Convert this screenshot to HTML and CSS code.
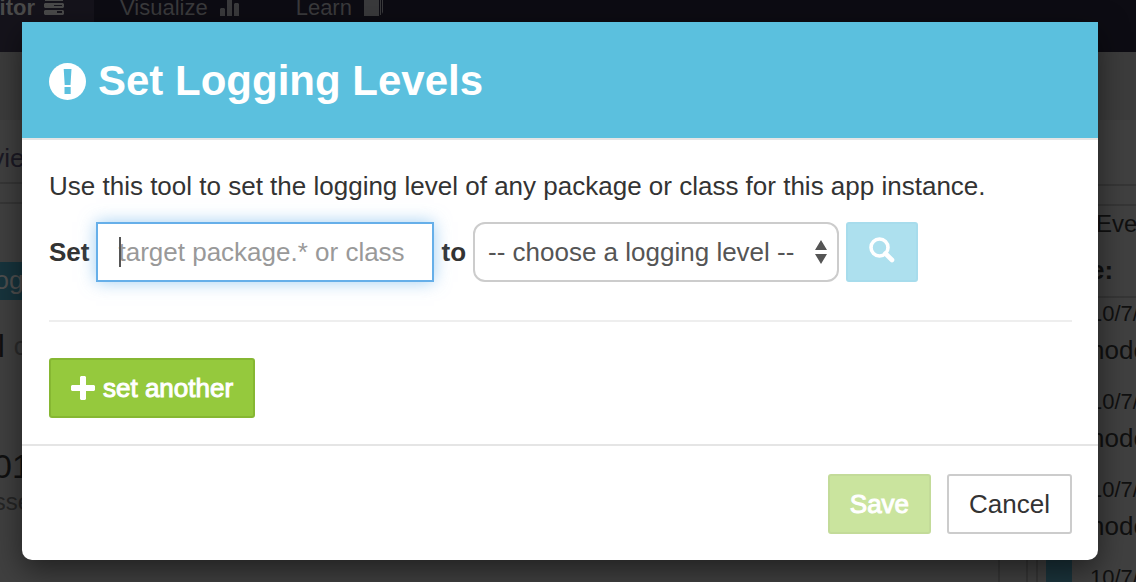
FILE: index.html
```html
<!DOCTYPE html>
<html lang="en">
<head>
<meta charset="utf-8">
<title>Set Logging Levels</title>
<link rel="stylesheet" href="styles.css">
</head>
<body>
<div class="page" inert>
  <nav class="nav">
    <a class="nav-item nav-active" href="#">Editor
      <svg width="20" height="16" viewBox="0 0 20 16"><path fill="currentColor" fill-rule="evenodd" d="M1 0h18v1H1zM1 3h18l1 1v3l-1 1H1L0 7V4zM10 5v1h8V5zM1 10h18l1 1v3l-1 1H1l-1-1v-3zM13 11v2h5v-2z"/></svg></a>
    <a class="nav-item" href="#">Visualize
      <svg width="19" height="16" viewBox="0 0 19 16"><path fill="currentColor" d="M0 9l1-1h3l1 1v7H0zM7 0h5v16H7zM14 4l1-1h3l1 1v12h-5z"/></svg></a>
    <a class="nav-item" href="#">Learn
      <svg width="19" height="16" viewBox="0 0 19 16"><path fill="currentColor" d="M0 0h15v16H0zM16 0h1v15h-1zM18 0h1v12l-1 2z"/></svg></a>
  </nav>
  <div class="band"></div>
  <div class="columns">
    <div class="side">
      <div class="side-tab">Overview</div>
      <div class="side-strip"></div>
      <div class="side-button">Logging</div>
      <div class="side-title">ol <span class="side-light">c</span></div>
      <div class="side-number">01</div>
      <div class="side-note">classes</div>
    </div>
    <div class="rail"></div>
    <div class="log">
      <div class="log-strip"></div>
      <div class="log-body">
        <div class="marker"></div>
        <div class="log-list">
          <div class="log-head">Eve</div>
          <div class="log-label">e:</div>
          <div class="entry"><div class="date">10/7/</div><div>node</div></div>
          <div class="entry"><div class="date">10/7/</div><div>node</div></div>
          <div class="entry"><div class="date">10/7/</div><div>node</div></div>
          <div class="entry"><div class="date">10/7/</div><div>node</div></div>
        </div>
      </div>
    </div>
  </div>
</div>

<form class="dialog" role="dialog" aria-labelledby="dialog-title">
  <header class="dialog-header">
    <svg width="37" height="37" viewBox="0 0 37 37" aria-hidden="true"><circle cx="18.500" cy="18.500" r="18.500" fill="#fff"/><path fill="#5bc0de" d="M14.700 6h7.800l-1 16h-5.800zM15.500 24h6.200v7h-6.200z"/></svg>
    <h1 id="dialog-title" class="dialog-title">Set Logging Levels</h1>
  </header>
  <div class="dialog-body">
    <p class="intro">Use this tool to set the logging level of any package or class for this app instance.</p>
    <div class="row">
      <label class="label" for="target">Set</label>
      <span class="target-wrap">
        <input class="target" id="target" type="text" placeholder="target package.* or class">
        <span class="caret"></span>
      </span>
      <label class="label" for="level">to</label>
      <span class="level-wrap">
        <select class="level" id="level"><option>-- choose a logging level --</option></select>
        <svg class="arrows" width="12" height="24" viewBox="0 0 12 24" aria-hidden="true"><path fill="#555" d="M6 0l6 10H0zM0 14h12L6 24z"/></svg>
      </span>
      <button class="button search" type="button" aria-label="Search">
        <svg width="26" height="26" viewBox="0 0 26 26" aria-hidden="true"><circle cx="10.500" cy="10.500" r="8.500" fill="none" stroke="#fff" stroke-width="3.600"/><path d="M16.500 16.500l6.500 6.500" stroke="#fff" stroke-width="4.600" stroke-linecap="round"/></svg>
      </button>
    </div>
    <hr class="rule">
    <button class="button add" type="button">
      <svg width="24" height="24" viewBox="0 0 24 24" aria-hidden="true"><path fill="#fff" d="M10 0h4l1 1v8h8l1 1v4l-1 1h-8v8l-1 1h-4l-1-1v-8H1l-1-1v-4l1-1h8V1z"/></svg>
      set another
    </button>
  </div>
  <footer class="dialog-footer">
    <button class="button save" type="button">Save</button>
    <button class="button cancel" type="button">Cancel</button>
  </footer>
</form>
</body>
</html>
```
FILE: styles.css
```css
* { box-sizing: border-box; }
html, body { height: 100%; }
body {
  margin: 0;
  overflow: hidden;
  font-family: "Liberation Sans", Arial, sans-serif;
  font-size: 26px;
  line-height: 36px;
  color: #333;
  background: #404040;
}
svg { display: block; flex: none; }

.page {
  height: 100%;
  display: flex;
  flex-direction: column;
  overflow: hidden;
  color: #101010;
}
.nav {
  display: flex;
  flex: none;
  height: 52px;
  background: #0d0c13;
}
.nav-item {
  display: flex;
  align-items: flex-start;
  gap: 12px;
  padding: 0 30px 0 26px;
  font-size: 22px;
  line-height: 16px;
  color: #3a3a3c;
  text-decoration: none;
}
.nav-active {
  justify-content: flex-end;
  gap: 9px;
  width: 94px;
  padding-left: 0;
  font-weight: bold;
  color: #4a4a4a;
  background: #15131b;
}
.nav-item + .nav-item + .nav-item { padding-left: 27px; }
.band { flex: none; height: 68px; background: #3c3c3c; }
.columns { flex: 1; display: flex; min-height: 0; }

.side { flex: 1; min-width: 0; overflow: hidden; }
.side > div { display: flex; width: 38px; white-space: pre; }
.side .side-tab { width: 100%; height: 64px; padding-top: 20px; border-bottom: 2px solid #363636; text-indent: -65px; color: #1b1924; }
.side .side-strip { width: 100%; height: 20px; border-bottom: 2px solid #363636; }
.side .side-button { height: 38px; margin-top: 58px; text-indent: -20px; color: #4f4f4f; background: #17343d; }
.side .side-title { height: 40px; margin-top: 26px; text-indent: -20px; font-size: 32px; line-height: 40px; }
.side-light { color: #2b2b2b; text-indent: 0; font-size: 26px; }
.side .side-number { margin-top: 80px; text-indent: -7px; font-size: 34px; line-height: 40px; }
.side .side-note { text-indent: -37px; font-size: 24px; line-height: 32px; color: #252525; }

.rail { width: 30px; border: solid #363636; border-width: 0 2px; }
.log { width: 108px; display: flex; flex-direction: column; }
.log-strip { flex: none; height: 22px; margin-top: 64px; border: solid #363636; border-width: 2px 0; }
.log-body {
  flex: 1;
  display: flex;
  gap: 18px;
  min-height: 0;
  margin-left: 8px;
  padding-left: 8px;
  border-left: 2px solid #363636;
}
.marker { width: 26px; background: #1b343c; }
.log-list { flex: 1; min-width: 0; white-space: nowrap; }
.log-head { padding-left: 6px; font-size: 24px; }
.log-label { margin-top: 10px; padding-bottom: 8px; font-weight: bold; border-bottom: 2px solid #363636; }
.entry { position: static; margin: -2px 0 18px; }
.date { font-size: 22px; }

.dialog {
  position: absolute;
  top: 22px;
  left: 22px;
  right: 38px;
  overflow: hidden;
  background: #fff;
  border-radius: 0 0 10px 10px;
  box-shadow: 0 10px 30px rgba(0, 0, 0, .5);
}
.dialog-header {
  display: flex;
  align-items: center;
  gap: 12px;
  height: 118px;
  padding: 2px 27px 0;
  background: #5bc0de;
  border-bottom: 2px solid #e5e5e5;
}
.dialog-title { margin: 0; font-size: 42px; line-height: 48px; color: #fff; }
.dialog-body { padding: 28px 26px 26px 27px; }
.intro { margin: 0 0 18px; }
.row { display: flex; align-items: center; gap: 7px; }
.label { font-weight: bold; }
.target-wrap, .level-wrap { position: relative; display: flex; }
.target, .level {
  height: 60px;
  font: inherit;
  line-height: 36px;
  background: #fff;
  outline: none;
}
.target {
  width: 338px;
  padding: 0 20px;
  border: 2px solid #66afe9;
  box-shadow: 0 0 16px rgba(102, 175, 233, .6);
}
.target::placeholder { color: #999; opacity: 1; }
.caret { position: absolute; left: 23px; top: 15px; width: 2px; height: 30px; background: #555; }
.level {
  appearance: none;
  width: 366px;
  padding: 0 40px 0 13px;
  color: #555;
  border: 2px solid #ccc;
  border-radius: 12px;
}
.arrows { position: absolute; right: 12px; top: 18px; pointer-events: none; }
.rule { margin: 38px 0 36px; border: 0; border-top: 2px solid #eee; }
.button {
  display: flex;
  align-items: center;
  justify-content: center;
  height: 60px;
  padding: 0 20px;
  font: inherit;
  color: #fff;
  border: 2px solid;
  border-radius: 3px;
}
.search { width: 72px; padding-bottom: 5px; background: #ade0ee; border-color: #a7dcec; }
.add { gap: 8px; background: #95c93d; border-color: #86b732; -webkit-text-stroke: 1px #fff; }
.dialog-footer {
  display: flex;
  justify-content: flex-end;
  gap: 16px;
  padding: 28px 26px 26px;
  border-top: 2px solid #e5e5e5;
}
.save { background: #cae49e; border-color: #c3db99; -webkit-text-stroke: 1px #fff; }
.cancel { color: #333; background: #fff; border-color: #ccc; }
```
